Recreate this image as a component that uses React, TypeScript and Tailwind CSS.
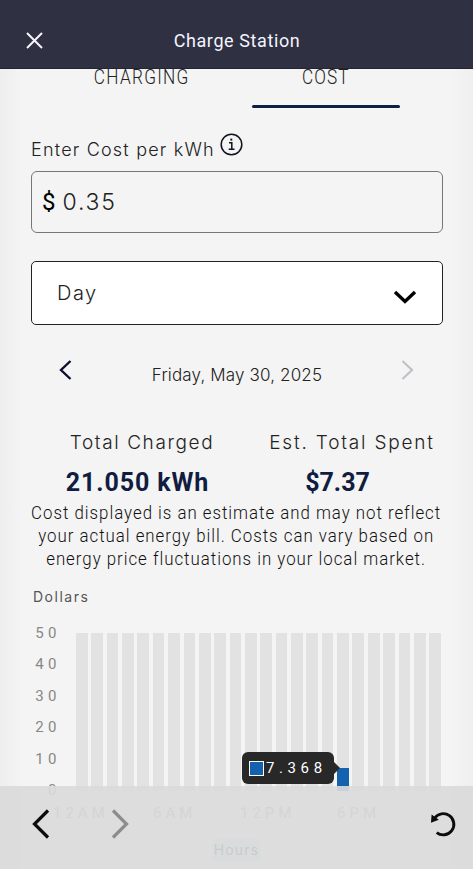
import React from "react";

const ticks = ["50", "40", "30", "20", "10", "0"];
const hours = Array.from({ length: 24 }, (_, i) => i);
const spent: Record<number, number> = { 17: 7.368 };

function Header() {
  return (
    <header className="relative z-10 h-[69px] shrink-0 bg-[#2f3041] border-b border-[#222334] flex items-center pt-3 px-[26px] text-[#f4f5ff]">
      <svg width="17" height="17" viewBox="0 0 17 17" fill="none" stroke="currentColor" strokeWidth="2">
        <path d="M1 1L16 16M16 1L1 16" />
      </svg>
      <h1 className="flex-1 pr-[16px] text-center text-[18px] tracking-[0.6px] font-normal">Charge Station</h1>
    </header>
  );
}

function Tabs() {
  return (
    <div className="h-[39px] pl-[68px] pr-[73px] flex justify-between text-[#222] text-[20px] leading-[20px]">
      <div className="w-[148px] -mt-[2px] text-center tracking-[1.5px]">
        <span className="inline-block scale-x-[0.86] font-light">CHARGING</span>
      </div>
      <div className="w-[148px] flex flex-col justify-between items-center">
        <span className="inline-block -mt-[2px] scale-x-[0.86] tracking-[1.3px] font-light">COST</span>
        <div className="w-full h-[3px] rounded-full bg-[#0d1f42]" />
      </div>
    </div>
  );
}

function CostForm() {
  return (
    <div className="pl-[31px] pr-[30px] font-['Inter'] font-light">
      <div className="h-[63px] pt-[26px] flex text-[#222]">
        <label className="pt-[3px] text-[18px] leading-[26px] tracking-[1.2px] whitespace-nowrap">Enter Cost per kWh</label>
        <svg className="ml-[5px] -mt-[1px]" width="23" height="23" viewBox="0 0 23 23" fill="none" stroke="#10131f" strokeWidth="1.5">
          <circle cx="11.5" cy="11.5" r="10.3" />
          <path d="M9 9.7h2.8v6.3M8.7 16.2h5.8" />
          <path d="M11.3 5.6v2" strokeWidth="1.9" />
        </svg>
      </div>
      <div className="h-[62px] border border-[#777] rounded-[6px] flex items-center pl-[10px] text-[23px] text-[#222]">
        <span className="font-normal font-['Roboto'] text-[24px] text-black">$</span>
        <span className="ml-[7px] tracking-[1.8px]">0.35</span>
      </div>
      <div className="mt-[28px] h-[64px] border border-[#222] rounded-[5px] bg-white flex items-center justify-between pl-[25px] pr-[25px] text-[20px] text-[#222]">
        <span className="tracking-[1.5px]">Day</span>
        <svg className="mt-[7px]" width="24" height="14" viewBox="0 0 24 14" fill="none" stroke="#000" strokeWidth="3.4">
          <path d="M2 2L12 11.5L22 2" />
        </svg>
      </div>
    </div>
  );
}

function DateNav() {
  return (
    <div className="h-[92px] pt-[35px] pl-[59px] pr-[59px] flex justify-between">
      <svg width="13" height="20" viewBox="0 0 13 20" fill="none" stroke="#0b1030" strokeWidth="2.4">
        <path d="M11.5 1L2 10L11.5 19" />
      </svg>
      <span className="h-[26px] mt-[2px] pl-px font-['Inter'] font-light text-[17px] leading-[26px] tracking-[0.15px] text-[#222] whitespace-nowrap">Friday, May 30, 2025</span>
      <svg width="13" height="20" viewBox="0 0 13 20" fill="none" stroke="#c0c1c8" strokeWidth="2.2">
        <path d="M1.5 1L11 10L1.5 19" />
      </svg>
    </div>
  );
}

function Totals() {
  return (
    <div className="flex pl-[45px] text-center whitespace-nowrap">
      <div className="w-[194px]">
        <div className="font-['Inter'] font-light text-[19px] leading-[52px] tracking-[1.6px] text-[#222]">Total Charged</div>
        <div className="-mt-[1px] -ml-[9px] text-[25px] leading-[30px] font-bold text-[#101c40] tracking-[0.9px]">21.050 kWh</div>
      </div>
      <div className="w-[226px]">
        <div className="font-['Inter'] font-light text-[19px] leading-[52px] tracking-[1.8px] text-[#222]">Est. Total Spent</div>
        <div className="-mt-[1px] -ml-[29px] text-[25px] leading-[30px] font-bold text-[#101c40]">$7.37</div>
      </div>
    </div>
  );
}

function Tooltip() {
  return (
    <div className="absolute left-[242px] top-[119px] w-[92px] h-[32px] rounded-[6px] bg-[#282828] flex items-center pl-[7px]">
      <div className="w-[15px] h-[15px] border border-white bg-[#1462ae]" />
      <span className="ml-[2px] text-white text-[15px] tracking-[4.6px]">7.368</span>
      <div className="absolute left-full top-[10px] border-y-[6px] border-l-[6px] border-y-transparent border-l-[#282828]" />
    </div>
  );
}

function Chart() {
  return (
    <div className="relative">
      <div className="flex h-[158px]">
        <div className="w-[76px] pl-[35px] -mt-[10.5px] text-[15px] leading-[20px] text-[#888] tracking-[4.5px]">
          {ticks.map((t) => (
            <div key={t} className="w-[26px] h-[31.6px] flex justify-end">{t}</div>
          ))}
        </div>
        <div className="flex w-[365px] justify-between">
          {hours.map((h) => (
            <div key={h} className="w-[11.7px] h-full bg-[#e2e2e2] flex items-end">
              <div className="w-full bg-[#1462ae]" style={{ height: spent[h] ? spent[h] * 3.16 : 0 }} />
            </div>
          ))}
        </div>
      </div>
      <div className="flex h-[40px] pt-[12px] pl-[53px] text-[15px] leading-[20px] tracking-[4px] text-[#888]">
        <span className="w-[100px]">12AM</span>
        <span className="w-[87px]">6AM</span>
        <span className="w-[97px]">12PM</span>
        <span>6PM</span>
      </div>
      <div className="flex justify-center">
        <span className="mt-[8px] px-[1px] bg-[#b5ecff] text-[#000] font-['Inter'] text-[14px] leading-[22px] tracking-[1.2px]">Hours</span>
      </div>
      <Tooltip />
    </div>
  );
}

function BottomBar() {
  return (
    <nav className="absolute bottom-0 inset-x-0 h-[83px] bg-[#dadadaec] flex items-center pl-[32px] pr-[16px] pb-[7px]">
      <svg width="18" height="30" viewBox="0 0 18 30" fill="none" stroke="#0c0c0c" strokeWidth="3.2">
        <path d="M16 1.5L2.5 15L16 28.5" />
      </svg>
      <svg className="ml-[61px]" width="18" height="30" viewBox="0 0 18 30" fill="none" stroke="#8c8c8c" strokeWidth="3.2">
        <path d="M2 1.5L15.5 15L2 28.5" />
      </svg>
      <svg className="ml-auto" width="28" height="28" viewBox="0 0 28 28" fill="none" stroke="#0c0c0c" strokeWidth="2.9">
        <path d="M5.5 8.3A10.6 10.6 0 1 1 7.7 22.6" />
        <path d="M2.6 4.5L2 12.8L9.8 9.8Z" fill="#0c0c0c" stroke="none" />
      </svg>
    </nav>
  );
}

export default function App() {
  return (
    <div className="relative w-[473px] h-[869px] overflow-hidden flex flex-col font-['Roboto',sans-serif] bg-[linear-gradient(to_right,#eeeeee,#f4f4f4_22px,#f4f4f4_450px,#efefef)]">
      <Header />
      <Tabs />
      <CostForm />
      <DateNav />
      <Totals />
      <p className="mt-[3px] h-[71px] flex flex-col items-center text-[19px] leading-[23px] font-light tracking-[1.1px] text-[#111] whitespace-nowrap">
        <span className="scale-x-[0.887]">Cost displayed is an estimate and may not reflect</span>
        <span className="scale-x-[0.887]">your actual energy bill. Costs can vary based on</span>
        <span className="scale-x-[0.887]">energy price fluctuations in your local market.</span>
      </p>
      <div className="h-[61px] pl-[33px] pt-[14px] font-['Inter'] text-[14px] leading-[22px] tracking-[1.5px] text-[#555]">Dollars</div>
      <Chart />
      <BottomBar />
    </div>
  );
}
